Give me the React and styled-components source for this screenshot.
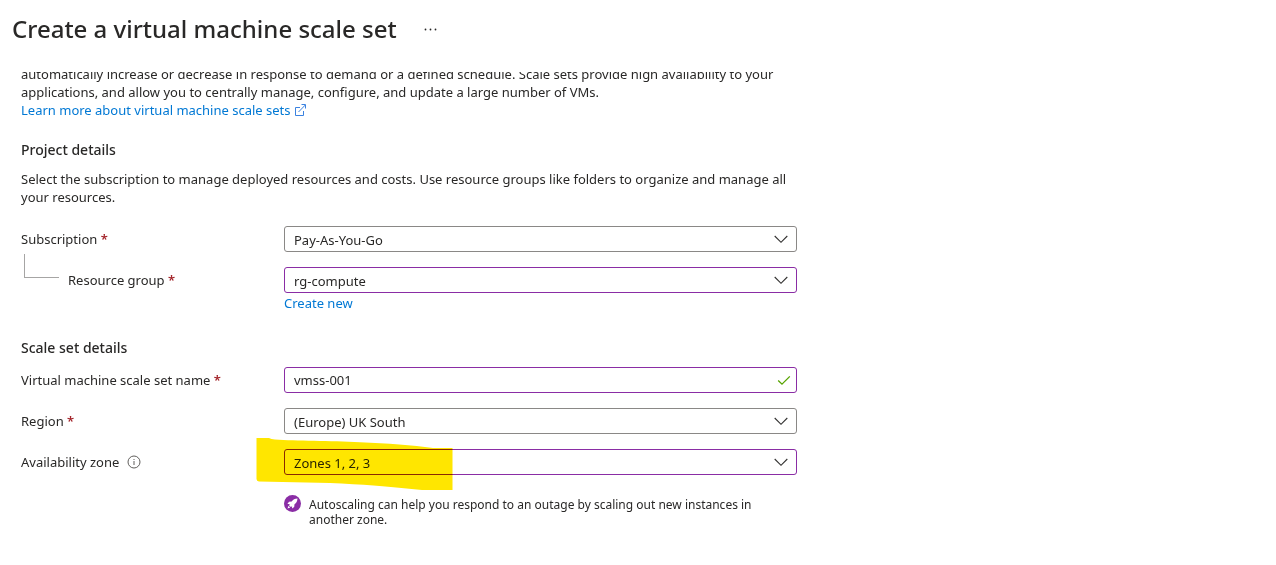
import React from 'react';
import styled, { createGlobalStyle } from 'styled-components';

const Global = createGlobalStyle`
  *, *::before, *::after { box-sizing: border-box; }
  body {
    margin: 0;
    background: #fff;
    color: #292827;
    font-family: "Noto Sans", "Open Sans", sans-serif;
    font-size: 13px;
    line-height: 18px;
  }
`;

const Header = styled.header`
  display: flex;
  align-items: center;
  gap: 26px;
  height: 72px;
  padding: 0 12px 14px;
`;

const Title = styled.h1`
  margin: 0;
  font-size: 24px;
  line-height: 32px;
  font-weight: 500;
`;

const MoreButton = styled.button`
  display: flex;
  padding: 0;
  border: 0;
  background: none;
  color: #292827;
`;

const Content = styled.main`
  overflow: hidden;
  padding: 0 21px 36px;
`;

const Form = styled.form`
  max-width: 776px;
`;

const Intro = styled.p`
  margin: -7px 0 0;
`;

const Link = styled.a`
  color: #0078d4;
  text-decoration: none;
`;

const ExternalLink = styled(Link)`
  display: inline-flex;
  align-items: center;
  gap: 4px;
`;

const Section = styled.section`
  margin-top: ${({ $gap }) => $gap}px;
`;

const SectionTitle = styled.h2`
  margin: 0 0 ${({ $gap }) => $gap}px;
  font-size: 14px;
  line-height: 20px;
  font-weight: 500;
`;

const Description = styled.p`
  margin: 0 0 20px;
`;

const Fields = styled.div`
  display: grid;
  gap: 15px;
`;

const Row = styled.div`
  display: grid;
  grid-template-columns: 263px minmax(0, 1fr);
  align-items: start;
`;

const LabelCell = styled.div`
  display: flex;
  align-items: center;
  gap: 8px;
  height: 26px;
`;

const Branch = styled.span`
  align-self: flex-start;
  flex: none;
  width: 35px;
  height: 24px;
  margin: -13px 1px 0 3px;
  border: solid #a6a5a4;
  border-width: 0 0 1px 1px;
`;

const Required = styled.span`
  color: #a4262c;
  font-weight: 600;
`;

const Control = styled.div`
  position: relative;
`;

const border = ({ $edited }) => ($edited ? '#8a2da5' : '#8a8886');

const Select = styled.select`
  display: block;
  appearance: none;
  width: 100%;
  height: 26px;
  margin: 0;
  padding: 1px 32px 0 9px;
  border: 1px solid ${border};
  border-radius: 3px;
  background: #fff;
  color: #292827;
  font: inherit;
`;

const TextInput = styled.input`
  display: block;
  width: 100%;
  height: 26px;
  margin: 0;
  padding: 0 32px 0 9px;
  border: 1px solid ${border};
  border-radius: 3px;
  background: #fff;
  color: #292827;
  font: inherit;
`;

const Adornment = styled.svg`
  position: absolute;
  top: 6px;
  right: ${({ $right }) => $right}px;
  pointer-events: none;
`;

const Marker = styled.svg`
  position: absolute;
  top: -11px;
  left: -28px;
  pointer-events: none;
  mix-blend-mode: multiply;
`;

const Below = styled.div`
  grid-column: 2;
  padding-top: 1px;
`;

const Hint = styled.div`
  grid-column: 2;
  display: flex;
  gap: 8px;
  padding-top: 22px;
  font-size: 12px;
  line-height: 15px;
`;

const HintIcon = styled.svg`
  flex: none;
  margin-top: -2px;
`;

function Chevron() {
  return (
    <Adornment $right={9} width="14" height="14" viewBox="0 0 14 14" fill="none" stroke="#323130" strokeWidth="1.100" aria-hidden="true">
      <path d="M.7 4 7 10.3 13.3 4" />
    </Adornment>
  );
}

function Label({ id, text, required, nested, info }) {
  return (
    <LabelCell>
      {nested && <Branch />}
      <label htmlFor={id}>
        {text} {required && <Required>*</Required>}
      </label>
      {info && (
        <svg width="14" height="14" viewBox="0 0 14 14" fill="none" stroke="#605e5c" role="img" aria-label="Information">
          <circle cx="7" cy="7" r="6" />
          <path d="M7 6v4M7 4v1" />
        </svg>
      )}
    </LabelCell>
  );
}

function SelectField({ id, value, edited, marker, children, ...label }) {
  return (
    <Row>
      <Label id={id} {...label} />
      <Control>
        <Select id={id} $edited={edited} defaultValue={value}>
          <option>{value}</option>
        </Select>
        <Chevron />
        {marker && (
          <Marker width="197" height="53" viewBox="0 0 197 53" aria-hidden="true">
            <path
              fill="#ffe600"
              d="M.5 0H13Q15 1.2 19 1.5C40 3 74 2.5 104 4.3C132 5.5 156 7 177 10H196.500V52H166C145 50 127 47.800 97 46.300C67 44 34 44.500 3 43.500Q.5 43 .5 41Z"
            />
          </Marker>
        )}
      </Control>
      {children}
    </Row>
  );
}

export default function App() {
  return (
    <>
      <Global />
      <Header>
        <Title>Create a virtual machine scale set</Title>
        <MoreButton type="button" aria-label="More actions">
          <svg width="14" height="4" viewBox="0 0 14 4" fill="currentColor" aria-hidden="true">
            <circle cx="2.500" cy="2.500" r=".9" />
            <circle cx="7.500" cy="2.500" r=".9" />
            <circle cx="12.500" cy="2.500" r=".9" />
          </svg>
        </MoreButton>
      </Header>
      <Content>
        <Form>
          <Intro>
            automatically increase or decrease in response to demand or a defined schedule. Scale sets provide high
            availability to your applications, and allow you to centrally manage, configure, and update a large number
            of VMs.
          </Intro>
          <ExternalLink href="#learn-more">
            Learn more about virtual machine scale sets
            <svg width="11" height="12" viewBox="0 0 11 12" fill="none" stroke="#3b82e0" aria-hidden="true">
              <path d="M5 3.500H.5v8h8V7M3.500 8 10.300 1M6.500.5h4v4" />
            </svg>
          </ExternalLink>

          <Section $gap={21}>
            <SectionTitle $gap={10}>Project details</SectionTitle>
            <Description>
              Select the subscription to manage deployed resources and costs. Use resource groups like folders to
              organize and manage all your resources.
            </Description>
            <Fields>
              <SelectField id="subscription" text="Subscription" required value="Pay-As-You-Go" />
              <SelectField id="resource-group" text="Resource group" required nested edited value="rg-compute">
                <Below>
                  <Link href="#create-new">Create new</Link>
                </Below>
              </SelectField>
            </Fields>
          </Section>

          <Section $gap={26}>
            <SectionTitle $gap={9}>Scale set details</SectionTitle>
            <Fields>
              <Row>
                <Label id="name" text="Virtual machine scale set name" required />
                <Control>
                  <TextInput id="name" type="text" $edited defaultValue="vmss-001" />
                  <Adornment $right={6} width="14" height="14" viewBox="0 0 14 14" fill="none" stroke="#57a300" strokeWidth="1.300" aria-hidden="true">
                    <path d="M1.200 7.500 5 11.200 12.800 3.400" />
                  </Adornment>
                </Control>
              </Row>
              <SelectField id="region" text="Region" required value="(Europe) UK South" />
              <SelectField id="zone" text="Availability zone" info edited marker value="Zones 1, 2, 3">
                <Hint>
                  <HintIcon width="17" height="17" viewBox="0 0 17 17" aria-hidden="true">
                    <circle cx="8.500" cy="8.500" r="8.500" fill="#8a2da5" />
                    <path
                      fill="#fff"
                      d="M13.500 3.500C10.800 3.600 9 4.700 7.700 6.500L5 6.800 3.400 9l2.400-.1L5 10.200 6.800 12l1.300-.8L8 13.600 10.200 12l.3-2.700C12.300 8 13.400 6.200 13.500 3.500ZM4.600 10.800 3.500 13.500 6.200 12.400Z"
                    />
                  </HintIcon>
                  <span>Autoscaling can help you respond to an outage by scaling out new instances in another zone.</span>
                </Hint>
              </SelectField>
            </Fields>
          </Section>
        </Form>
      </Content>
    </>
  );
}
